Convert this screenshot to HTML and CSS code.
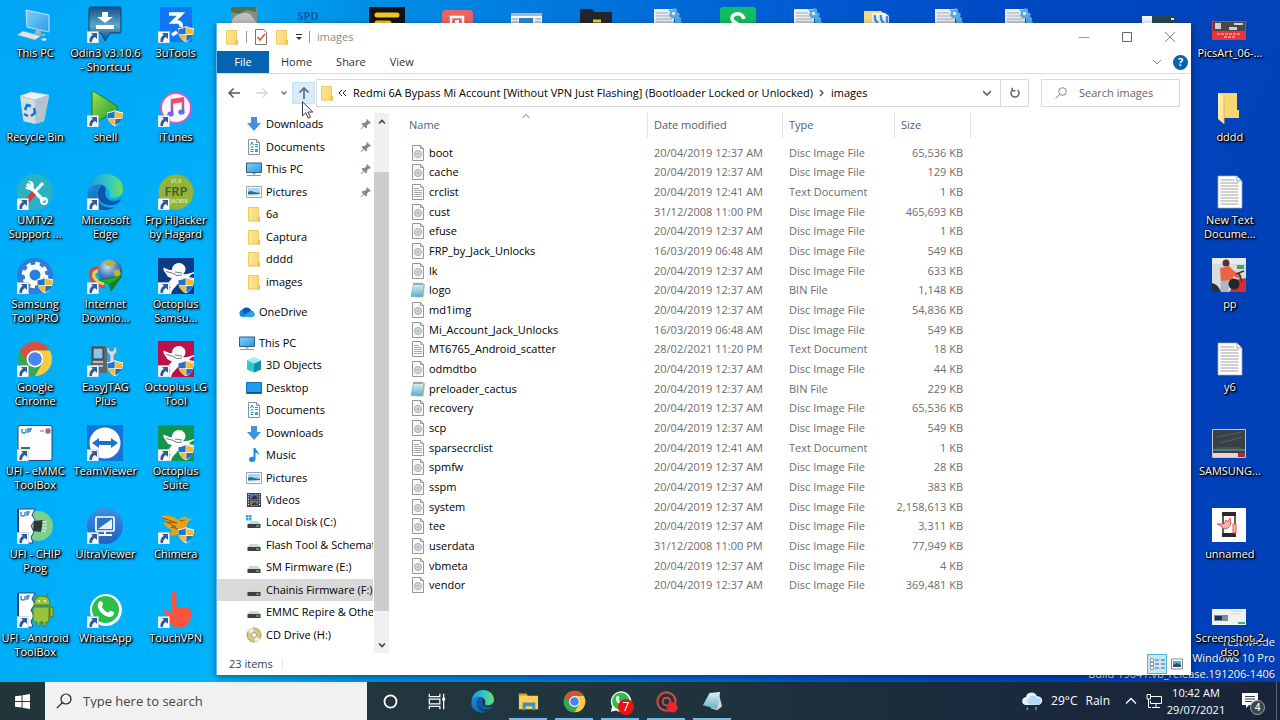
FILE: index.html
```html
<!DOCTYPE html>
<html lang="en">
<head>
<meta charset="utf-8">
<title>images</title>
<link rel="stylesheet" href="styles.css">
</head>
<body>
<svg class="defs" aria-hidden="true">
  <defs>
    <linearGradient id="gFolder" x1="0" y1="0" x2="1" y2="0"><stop offset="0" stop-color="#ffe58e"/><stop offset="1" stop-color="#f8d775"/></linearGradient>
    <linearGradient id="gEdgeA" x1="0" y1="0" x2="1" y2="0"><stop offset="0" stop-color="#1a9ae0"/><stop offset=".6" stop-color="#35c8c0"/><stop offset="1" stop-color="#6be05a"/></linearGradient>
    <linearGradient id="gEdgeB" x1="0" y1="0" x2="1" y2="1"><stop offset="0" stop-color="#1a8fe0"/><stop offset="1" stop-color="#0c4a98"/></linearGradient>
    <linearGradient id="gScreen" x1="0" y1="0" x2="1" y2="1"><stop offset="0" stop-color="#7fd0fb"/><stop offset="1" stop-color="#2b9be8"/></linearGradient>
    <linearGradient id="gOdin" x1="0" y1="0" x2="0" y2="1"><stop offset="0" stop-color="#12508c"/><stop offset=".55" stop-color="#5fa6c8"/><stop offset="1" stop-color="#0f4684"/></linearGradient>
    <linearGradient id="gPlay" x1="0" y1="0" x2="1" y2="1"><stop offset="0" stop-color="#9fe05a"/><stop offset="1" stop-color="#179a1d"/></linearGradient>
    <linearGradient id="gTunes" x1="0" y1="0" x2="1" y2="1"><stop offset="0" stop-color="#f6577c"/><stop offset=".5" stop-color="#b064e6"/><stop offset="1" stop-color="#f04cb0"/></linearGradient>
    <linearGradient id="gNote" x1="0" y1="0" x2="0" y2="1"><stop offset="0" stop-color="#f0525f"/><stop offset="1" stop-color="#4a6fe8"/></linearGradient>
    <linearGradient id="gUltra" x1="0" y1="0" x2="0" y2="1"><stop offset="0" stop-color="#3f8fe6"/><stop offset="1" stop-color="#1d62bf"/></linearGradient>
    <radialGradient id="gGlobe" cx=".4" cy=".3" r=".8"><stop offset="0" stop-color="#cfe2f7"/><stop offset=".5" stop-color="#4d80c8"/><stop offset="1" stop-color="#16377e"/></radialGradient>
    <linearGradient id="gPad" x1="0" y1="0" x2="0" y2="1"><stop offset="0" stop-color="#dff1f5"/><stop offset="1" stop-color="#5fb0c8"/></linearGradient>

    <symbol id="shortcut" viewBox="0 0 36 36"><path d="M0 24.500h11.500v11.500H0z" fill="#fafafa" stroke="#b8c4cc" stroke-width=".6"/><path d="M4 26h6v6l-2-2c-2 1-3 2.500-3 5H2.500c-.5-3.500.8-5.500 3.300-7.200z" fill="#2a5c9e"/></symbol>
    <symbol id="shield" viewBox="0 0 36 36"><path d="M28 19c2.500 1.500 5 2 8 2.200 0 7-2.500 11.500-8 14-5.500-2.500-8-7-8-14 3-.2 5.500-.7 8-2.200z" fill="#fff"/><path d="M27.700 20v7.300h-6.900c-.3-1.700-.4-3.400-.4-5 2.700-.2 5-.9 7.300-2.300zM28.300 28v6.500c4-1.700 6-4 6.900-6.500z" fill="#1c75c8"/><path d="M28.300 20v7.300h6.900c.3-1.700.4-3.400.4-5-2.700-.2-5-.9-7.300-2.300zM27.700 28v6.500c-4-1.700-6-4-6.900-6.500z" fill="#f8b830"/></symbol>
    <symbol id="folder" viewBox="0 0 16 16"><path d="M2 1h11v10h1v4.500H2z" fill="url(#gFolder)"/><path d="M2.500 1.500h10v9.500h1v4h-11z" fill="none" stroke="#ebca68"/><path d="M11.500 11h2.500v4.500h-3z" fill="#efc54e"/></symbol>
    <symbol id="down" viewBox="0 0 16 16"><path d="M5 1h6v6h4l-7 8-7-8h4z" fill="#3f94dd"/></symbol>
    <symbol id="docs" viewBox="0 0 16 16"><path d="M2.500.5h8l3 3v12h-11z" fill="#fff" stroke="#8b9398"/><path d="M10.500.5v3h3" fill="none" stroke="#8b9398"/><path d="M4.500 6l1.500-3 1.500 3M4.500 8h3m1.500-2.500h3m-3 2h3M4.500 10.500h3m-3 2h3" fill="none" stroke="#2f8fb6"/><path d="M9 10h3v3H9z" fill="#4c9fc0"/></symbol>
    <symbol id="pc" viewBox="0 0 16 16"><path d="M.5 2h15v9.500H.5z" fill="url(#gScreen)" stroke="#3b5b78"/><path d="M6.500 12h3v1.500h-3z" fill="#9ab"/><path d="M1 14.500h14" stroke="#7c9cb0"/></symbol>
    <symbol id="pics" viewBox="0 0 16 16"><path d="M.5 2.500h15v11H.5z" fill="#fff" stroke="#9aa5ad"/><path d="M2 4h12v8H2z" fill="#a9d8f4"/><path d="M2 8c3-3 6 1 12 1v3H2z" fill="#2c6e8e"/><path d="M2 10.500l12-.5v2H2z" fill="#d8ecf5"/></symbol>
    <symbol id="cloud" viewBox="0 0 16 16"><path d="M4 13a3.700 3.700 0 0 1-.7-7.300A5 5 0 0 1 12 6.500 3.400 3.400 0 0 1 13 13z" fill="#1286d8"/><path d="M3.500 5.600A5 5 0 0 1 12 6.500L5 10z" fill="#0c58a8"/><path d="M3 12.700L12 7.500a3.500 3.500 0 0 1 3.800 3c0 1.500-1.200 2.500-2.800 2.500H4z" fill="#29a4ea"/></symbol>
    <symbol id="cube" viewBox="0 0 16 16"><path d="M8 .5l7 3v9L8 15.500l-7-3v-9z" fill="#35c4d6"/><path d="M8 6.500l7-3v9l-7 3z" fill="#138fa8"/><path d="M1 3.500l7-3 7 3-7 3z" fill="#9beef3"/></symbol>
    <symbol id="desk" viewBox="0 0 16 16"><path d="M.5 2.500h15v11H.5z" fill="#1a9cf0" stroke="#1470ad"/><path d="M1 12.500h14" stroke="#0c4d82"/></symbol>
    <symbol id="music" viewBox="0 0 16 16"><path d="M7.500 1h2c.3 2.500 3.800 3.500 3.300 7.500-.6-1.700-1.600-2.500-3.300-2.800V12c0 4-6.500 4-6.500.5 0-2.500 2.500-3.400 4.500-2.500z" fill="#1e90dc"/></symbol>
    <symbol id="video" viewBox="0 0 16 16"><path d="M1 1h14v14H1z" fill="#414650"/><path d="M4 2h8v5.500H4z" fill="#5875b8"/><path d="M4 8.500h8V14H4z" fill="#86745a"/><path d="M5 7l3-4 3 2v2zM5 13l4-3 3 3z" fill="#26334f"/><path d="M2.500 2v12m11-12v12" stroke="#fff" stroke-dasharray="1 1.500"/></symbol>
    <symbol id="drive" viewBox="0 0 16 16"><path d="M4 7h8l2.500 3h-13z" fill="#d5d5d5"/><path d="M1.500 10h13v4h-13z" fill="#3c4144"/><path d="M10 12h3" stroke="#7fe08a"/></symbol>
    <symbol id="cdrive" viewBox="0 0 16 16"><path d="M0 1h2.500v2.500H0zM3 1h2.500v2.500H3zM0 4h2.500v2.500H0zM3 4h2.500v2.500H3z" fill="#27a9e5"/><path d="M5 7h7l2.500 3h-13z" fill="#d5d5d5"/><path d="M1.500 10h13v4h-13z" fill="#3c4144"/><path d="M10 12h3" stroke="#7fe08a"/></symbol>
    <symbol id="cd" viewBox="0 0 16 16"><circle cx="8" cy="8" r="7" fill="#dcc878" stroke="#a69a6b"/><path d="M8 8L2 4a7 7 0 0 1 5-3zM8 8l6 4a7 7 0 0 1-5 3z" fill="#f7f1d0"/><circle cx="8" cy="8" r="2.500" fill="#fff" stroke="#999"/></symbol>
    <symbol id="pin" viewBox="0 0 12 12"><path d="M7 1l4 4-1 .6-.8-.2L7 7.600v2L6 10.500 3.900 8.400 1 11.300l-.5-.5L3.400 7.900 1.500 6l1-.9h2L6.700 2.900l-.3-.9z" fill="#7f8a94"/></symbol>
    <symbol id="disc" viewBox="0 0 16 16"><path d="M2.500.5h8l3 3v12h-11z" fill="#f8f8f8" stroke="#979797"/><path d="M10.500.5v3h3" fill="none" stroke="#979797"/><circle cx="8" cy="9" r="3.500" fill="#dcdfe2" stroke="#a5a8ab"/><circle cx="8" cy="9" r="1" fill="#fff" stroke="#8d9093" stroke-width=".7"/></symbol>
    <symbol id="txt" viewBox="0 0 16 16"><path d="M2.500.5h8l3 3v12h-11z" fill="#fff" stroke="#949494"/><path d="M10.500.5v3h3M4 4.500h5M4 6.500h8m-8 2h8m-8 2h8m-8 2h8" fill="none" stroke="#aaa"/></symbol>
    <symbol id="bin" viewBox="0 0 16 16"><path d="M13 2l2 .5-1.500 13H5z" fill="#c9c8a4"/><path d="M3.500 2H14l-1.500 12.500H1z" fill="url(#gPad)" stroke="#62a9c0" stroke-width=".6"/><path d="M4 .8v2M6 .8v2M8 .8v2m2-2v2m2-2v2" stroke="#45525a" stroke-width=".8"/></symbol>
    <symbol id="edge" viewBox="0 0 36 36"><path d="M1 18C1 8 8.500 0 18.500 0 29 0 36 7 36 15c0 6-4.500 9-9.500 9-3 0-5-1-4.500-2.500C23.500 19 22 11.500 14.500 11 7 10.500 2 14 1 18z" fill="url(#gEdgeA)"/><path d="M.5 19.500C2 12 9 9.500 15 11c-6 3-7 11-3 17 3 4.500 10 6.500 16 5-3 2-6.500 3-10 3C8 36 0 28.500.5 19.500z" fill="url(#gEdgeB)"/><path d="M15 11c-8 5-6 22 11 20 4-.5 6.500-3 7.500-4.500 1-1 0-1.500-1-1-8 4-16-1-14-8.500.5-3 0-5-3.500-6z" fill="#1256a5"/></symbol>
    <symbol id="chrome" viewBox="0 0 36 36"><circle cx="18" cy="18" r="17" fill="#36a853"/><path d="M3.300 9.500A17 17 0 0 1 32.700 9.500H18a8.500 8.500 0 0 0-7.400 12.700z" fill="#dc4e3e"/><path d="M32.700 9.500A17 17 0 0 1 18 35l7.400-12.700a8.500 8.500 0 0 0 0-8.500L18 9.500z" fill="#fccb3e"/><circle cx="18" cy="18" r="8.500" fill="#fff"/><circle cx="18" cy="18" r="6.800" fill="#4a84ee"/></symbol>
    <symbol id="whats" viewBox="0 0 36 36"><path d="M3 34l2-8A16 16 0 1 1 11 32z" fill="#fff"/><circle cx="18.500" cy="17.500" r="13.500" fill="#29bf4b"/><path d="M12 10c2-2 3-1 4 2 .6 1.700-1.500 2-1 3 1.500 3 3.500 4.600 6 5.500 1 .3 1.500-2 2.700-1.700 3 1 4 1.500 3.300 3.200-2 5-9 3-13-1.500-3-3.500-4.500-8-2-10.500z" fill="#fff"/></symbol>
    <symbol id="squid" viewBox="0 0 36 36"><path d="M14 12c0-4 3-7 7-7 3.500 0 6.500 3 6.500 6 0 2-1 4-2.500 5 3 1 7-1 11-2v1.500c-3 .5-4 2-5 3.500l5 1v1l-9-1-4 1c-3 7-9 9-10 15h-3c0-3 1-5 3-7-3 1-8 1-13 0v-2c6 1 11-2 14-7-2 0-4-1-5-2.500L5.500 12V9.500l6 2.500z" fill="#fff"/><path d="M8 13.500l6 1.500 5 2.500 5-.5M17 14l7 1" fill="none" stroke="#4b5675" stroke-width=".8"/></symbol>
    <symbol id="longtext" viewBox="0 0 36 36"><path d="M6 2h19l5 5v27H6z" fill="#fff" stroke="#a6abb0" stroke-width=".7"/><path d="M25 2v5h5M8.500 6h14M8.500 9h18M8.500 12h18M8.500 15h18M8.500 18h18M8.500 21h18M8.500 24h18M8.500 27h18M8.500 30h18" fill="none" stroke="#9b9fa3"/></symbol>
    <symbol id="gearfile" viewBox="0 0 36 36"><path d="M4 2h20v34H4z" fill="#eceff1"/><path d="M6 6h12M6 9h14M6 12h16M6 15h18" stroke="#a2a7ac"/><path d="M18 2l4 1 2-2 3 1v3l3 2-2 4-3 1-4-1-2-3 1-3z" fill="#55a8e2"/><circle cx="23.500" cy="6.500" r="1.800" fill="#d9ecf8"/><path d="M25 11l3-2 3 2v3l2 3-5 3-3-4z" fill="#55a8e2"/></symbol>
    <symbol id="ufi" viewBox="0 0 36 36"><path d="M1 1h17l-3 6 3 5-4 6 3 6-3 5 2 6H1z" fill="#fff" stroke="#174f9c"/><path d="M1 1v34" stroke="#1a3f78" stroke-width="2"/><path d="M4 4v3q0 1 2 1t2-1V4m2 4V4h3m-3 2h2" fill="none" stroke="#2b7cc8" stroke-width="1.300"/></symbol>
  </defs>
</svg>

<main class="desktop">
  <div class="watermark">Test Mode<br>Windows 10 Pro<br>Build 19041.vb_release.191206-1406</div>

  <a class="icon c1 r1" href="#"><svg viewBox="0 0 36 36"><path d="M9 3l23 5v17L10 20z" fill="url(#gScreen)" stroke="#c7e6f8"/><path d="M20 22l4 1v4h5l-2 2-10-2z" fill="#9fb8c8"/><path d="M6 24l18 5-6 4L0 28z" fill="#dce7ef" stroke="#7d9bb0" stroke-width=".6"/><path d="M24 32l4-1 2 2-4 1z" fill="#e8eef2"/></svg><span>This PC</span></a>
  <a class="icon c2 r1" href="#"><svg viewBox="0 0 36 36"><path d="M4 0h28q2 0 2 2v22q0 2-2 2H23l-5 8-4-8H4q-2 0-2-2V2q0-2 2-2z" fill="url(#gOdin)" stroke="#0d3c72"/><path d="M15 5h6v5h5l-8 6-8-6h5zM9 18h18v4H9z" fill="#fff"/><use href="#shortcut"/></svg><span>Odin3 v3.10.6<br>- Shortcut</span></a>
  <a class="icon c3 r1" href="#"><svg viewBox="0 0 36 36"><path d="M2 0h32v35H2z" fill="#1276f5"/><path d="M11 7h12l-8 8h5q4 1 3 5M14 28l5-3" fill="none" stroke="#fff" stroke-width="3.500"/><use href="#shortcut"/><use href="#shield"/></svg><span>3uTools</span></a>
  <a class="icon c1 r2" href="#"><svg viewBox="0 0 36 36"><path d="M3 5l3 23q0 3 4 3l8 2 9-3 5-25-14 4z" fill="#d3dde4"/><path d="M3 5l11-4 18 3-14 5z" fill="#eef3f6" stroke="#b5c3cc" stroke-width=".8"/><path d="M18 9l14-5-5 26-9 3z" fill="#b4c4cf"/><path d="M8 19l2-5 4 1m3 2l1 5-4 3m-3 0l-4-2" fill="none" stroke="#1675cc" stroke-width="2.500"/></svg><span>Recycle Bin</span></a>
  <a class="icon c2 r2" href="#"><svg viewBox="0 0 36 36"><path d="M5 2q0-3 3-1l22 14q2 2 0 4L8 32q-3 1-3-2z" fill="url(#gPlay)" stroke="#1f7d17"/><use href="#shortcut"/><use href="#shield"/></svg><span>shell</span></a>
  <a class="icon c3 r2" href="#"><svg viewBox="0 0 36 36"><circle cx="18" cy="17" r="15" fill="#fbf7fc" stroke="url(#gTunes)" stroke-width="2"/><path d="M14 22V10l11-2v12" fill="none" stroke="url(#gNote)" stroke-width="2.500"/><path d="M13 8l13-2v5l-13 2z" fill="#ee4f67"/><ellipse cx="12.500" cy="23" rx="3.200" ry="2.600" fill="#7a62e8"/><ellipse cx="23.500" cy="21" rx="3.200" ry="2.600" fill="#4f77e8"/><use href="#shortcut"/></svg><span>iTunes</span></a>
  <a class="icon c1 r3" href="#"><svg viewBox="0 0 36 36"><circle cx="18" cy="18" r="18" fill="#27b3c4"/><path d="M10 10l17 17" stroke="#fff" stroke-width="3.500"/><path d="M26 9L11 25" stroke="#fff" stroke-width="3"/><path d="M17 19l-7 8" stroke="#e2392f" stroke-width="5"/><path d="M8 13a4.500 4.500 0 1 0 3-6l3 3-3 3z" fill="#fff"/><circle cx="27" cy="27" r="3" fill="none" stroke="#fff" stroke-width="2"/><use href="#shortcut"/></svg><span>UMTv2<br>Support ...</span></a>
  <a class="icon c2 r3" href="#"><svg viewBox="0 0 36 36"><use href="#edge"/><use href="#shortcut"/></svg><span>Microsoft<br>Edge</span></a>
  <a class="icon c3 r3" href="#"><svg viewBox="0 0 36 36"><circle cx="18" cy="18" r="17.500" fill="#92b43a"/><text x="18" y="22" class="logo-frp">FRP</text><text x="18" y="9" class="logo-tiny">V1.0</text><text x="21" y="29" class="logo-tiny">JACKER</text><use href="#shortcut"/></svg><span>Frp HiJacker<br>by Hagard</span></a>
  <a class="icon c1 r4" href="#"><svg viewBox="0 0 36 36"><circle cx="18" cy="18" r="18" fill="#2f7ddb"/><circle cx="18" cy="17" r="8" fill="none" stroke="#fff" stroke-width="5"/><circle cx="18" cy="17" r="11.500" fill="none" stroke="#fff" stroke-width="3.500" stroke-dasharray="4.500 4.530"/><use href="#shortcut"/><use href="#shield"/></svg><span>Samsung<br>Tool PRO</span></a>
  <a class="icon c2 r4" href="#"><svg viewBox="0 0 36 36"><path d="M14 10C5 9 2 14 4 20c2 5 8 8 14 9" fill="none" stroke="#e0482c" stroke-width="3"/><path d="M14 13C8 12 6 15 7 19c2 4 6 6 10 7" fill="none" stroke="#f3cf35" stroke-width="3"/><circle cx="23" cy="13" r="12" fill="url(#gGlobe)"/><path d="M17 5q6-5 12 0l-4 4-5-1zM26 13l6-2 2 5-5 5z" fill="#b8b72c"/><path d="M12 22l23-4-11 15-2-7z" fill="#22b02b" stroke="#0d7417" stroke-width=".7"/><path d="M22 26l13-8-11 15z" fill="#14801e"/><use href="#shortcut"/></svg><span>Internet<br>Downlo...</span></a>
  <a class="icon c3 r4" href="#"><svg viewBox="0 0 36 36"><path d="M0 0h36v36H0z" fill="#0c3c86"/><use href="#squid"/><use href="#shortcut"/><use href="#shield"/></svg><span>Octoplus<br>Samsu...</span></a>
  <a class="icon c1 r5" href="#"><svg viewBox="0 0 36 36"><use href="#chrome"/><use href="#shortcut"/></svg><span>Google<br>Chrome</span></a>
  <a class="icon c2 r5" href="#"><svg viewBox="0 0 36 36"><path d="M4 5h14l2 2v25H4z" fill="#5d666d"/><path d="M6 7h10v11H6z" fill="#8fc3ea" stroke="#2d3439"/><path d="M6 21h10m-10 4h10" stroke="#b7bdc2" stroke-width="2"/><path d="M21 5l2 5h3l2-5q4 5-1 9v10h-4V14q-5-4-2-9z" fill="#d3dce2" stroke="#71808a" stroke-width=".6"/><use href="#shortcut"/><use href="#shield"/></svg><span>EasyJTAG<br>Plus</span></a>
  <a class="icon c3 r5" href="#"><svg viewBox="0 0 36 36"><path d="M0 0h36v36H0z" fill="#bc1249"/><use href="#squid"/><use href="#shortcut"/><use href="#shield"/></svg><span>Octoplus LG<br>Tool</span></a>
  <a class="icon c1 r6" href="#"><svg viewBox="0 0 36 36"><rect x="1" y=".5" width="34" height="35" rx="2" fill="#fdfdfd" stroke="#27436b"/><path d="M5 4v3q0 1 2 1t2-1V4m2 4V4h4m-4 2h3" fill="none" stroke="#2b7cc8" stroke-width="1.300"/><path d="M23 6h4M29 4h4v4h-4z" stroke="#d34d63" fill="#5b7fc0"/><path d="M4 22h9v2H4z" fill="#38765f"/><use href="#shortcut"/></svg><span>UFI - eMMC<br>ToolBox</span></a>
  <a class="icon c2 r6" href="#"><svg viewBox="0 0 36 36"><path d="M0 0h36v36H0z" fill="#1673d6"/><circle cx="18" cy="18" r="15.500" fill="#fff"/><path d="M5 18l7-5v3h12v-3l7 5-7 5v-3H12v3z" fill="#1b72cf"/><use href="#shortcut"/></svg><span>TeamViewer</span></a>
  <a class="icon c3 r6" href="#"><svg viewBox="0 0 36 36"><path d="M0 0h36v36H0z" fill="#15954b"/><use href="#squid"/><use href="#shortcut"/><use href="#shield"/></svg><span>Octoplus<br>Suite</span></a>
  <a class="icon c1 r7" href="#"><svg viewBox="0 0 36 36"><circle cx="21" cy="18" r="15" fill="#7fcf8c"/><use href="#ufi"/><path d="M17 13l9-1-2 12-8-1z" fill="#30363a"/><path d="M25 14h5m-5 3h5m-5 3h5m-6 3h5" stroke="#eef5ee"/><use href="#shortcut"/></svg><span>UFI - CHIP<br>Prog</span></a>
  <a class="icon c2 r7" href="#"><svg viewBox="0 0 36 36"><circle cx="18" cy="18" r="18" fill="url(#gUltra)"/><rect x="9" y="9" width="18" height="14" rx="1" fill="#2a74cd" stroke="#fff" stroke-width="1.700"/><path d="M11 21L25 11v10z" fill="#eaf4fd"/><path d="M18 23v3m-6 1h13" stroke="#fff" stroke-width="2"/><use href="#shortcut"/></svg><span>UltraViewer</span></a>
  <a class="icon c3 r7" href="#"><svg viewBox="0 0 36 36"><path d="M3 8q11-2 17 4l5-3q4-1 5 2l5-1-5 4-3 8-8 5-8 1 3-6q-6-2-9-8l6 1z" fill="#e6a01c"/><path d="M5 10l14 5-10-1 9 5-5 0 7 2M22 13l5-1" fill="none" stroke="#8f5b0a"/><use href="#shortcut"/><use href="#shield"/></svg><span>Chimera</span></a>
  <a class="icon c1 r8" href="#"><svg viewBox="0 0 36 36"><use href="#ufi"/><path d="M17 13q0-9 8-9t8 9zM16 15h16v13q0 2-2 2h-1v4h-3v-4h-3v4h-3v-4q-4 0-4-2zM33 15h3v10h-3zM20 5l-2-4m11 4l2-4" fill="#9ac437" stroke="#557b18" stroke-width="1"/><circle cx="22" cy="9" r="1" fill="#fff"/><circle cx="28" cy="9" r="1" fill="#fff"/><use href="#shortcut"/></svg><span>UFI - Android<br>ToolBox</span></a>
  <a class="icon c2 r8" href="#"><svg viewBox="0 0 36 36"><use href="#whats"/><use href="#shortcut"/></svg><span>WhatsApp</span></a>
  <a class="icon c3 r8" href="#"><svg viewBox="0 0 36 36"><path d="M13.500 2q0-2 2.500-2t2.500 2v13l11 1q4 1 4 5-1 7-3 11-2 3-7 3h-6q-3 0-5-4L6 19q0-2 3-1l4.500 4z" fill="#f9543e"/><use href="#shortcut"/></svg><span>TouchVPN</span></a>

  <span class="icon c4 r1"><svg viewBox="0 0 36 36"><path d="M3 0h26v36H3z" fill="#829080"/><path d="M4 13q8-10 18-6l7 9v20H4z" fill="#c1bdbd"/><path d="M3 0h25v5l-9-2-8 4-8-2z" fill="#566f43"/></svg></span>
  <span class="icon c5 r1"><svg viewBox="0 0 36 36"><text x="10" y="13" class="logo-spd">SPD</text><path d="M2 18q8-7 15 0" fill="#1366bd"/><path d="M20 18q7-6 14 0" fill="#15a6e0"/></svg></span>
  <span class="icon c6 r1"><svg viewBox="0 0 36 36"><path d="M0 0h36v36H0z" fill="#14130f"/><path d="M8 8h20M8 16h12" stroke="#f3c522" stroke-width="5" stroke-linecap="round"/></svg></span>
  <span class="icon c7 r1"><svg viewBox="0 0 36 36"><rect x="3" y="3" width="31" height="31" rx="4" fill="#e96463"/><path d="M12 20v-10h12v10" fill="none" stroke="#fff" stroke-width="2.500"/><path d="M16 13h4v4h-4z" fill="#fff"/></svg></span>
  <span class="icon c8 r1"><svg viewBox="0 0 36 36"><path d="M2 6h31v25H2z" fill="#f5f7f8"/><path d="M2 6h31v3H2z" fill="#a9b8c1"/><path d="M10 11h14v12H10z" fill="#3085ce"/><path d="M3 12h6M3 15h6m17-3h6m-6 3h6" stroke="#899"/></svg></span>
  <span class="icon c9 r1"><svg viewBox="0 0 36 36"><path d="M1 2h12l3 3h17v28H1z" fill="#252628"/><path d="M14 14h8" stroke="#f2ce38" stroke-width="3"/></svg></span>
  <span class="icon c10 r1"><svg viewBox="0 0 36 36"><use href="#gearfile"/></svg></span>
  <span class="icon c11 r1"><svg viewBox="0 0 36 36"><rect width="36" height="36" rx="3" fill="#12bd60"/><path d="M24 12q-2-6-8-5-6 2-3 7l6 4" fill="none" stroke="#fff" stroke-width="3.500"/></svg></span>
  <span class="icon c12 r1"><svg viewBox="0 0 36 36"><use href="#gearfile"/></svg></span>
  <span class="icon c13 r1"><svg viewBox="0 0 36 36"><path d="M4 4h17l4 3v28H4z" fill="#f5d989"/><path d="M12 6h13l4 3v27H12z" fill="#eef3f7"/><path d="M15 8q-1 5 3 8m3-8q-1 5 3 8m3-7v7" fill="none" stroke="#4a8fd0" stroke-width="2.500"/></svg></span>
  <span class="icon c14 r1"><svg viewBox="0 0 36 36"><use href="#gearfile"/></svg></span>
  <span class="icon c15 r1"><svg viewBox="0 0 36 36"><use href="#gearfile"/></svg></span>
  <span class="icon c17 r1"><svg viewBox="0 0 36 36"><path d="M0 9h34v20H0z" fill="#f2f4f5"/><path d="M10 9h24v20H10z" fill="#244653"/><path d="M29 11h3v2h-3z" fill="#dfe7e9"/></svg></span>

  <a class="icon c18 r1" href="#"><svg viewBox="0 0 36 36"><path d="M0 14h34v19H0z" fill="#e5343b"/><path d="M1 15h32v9H1z" fill="#4b4647"/><path d="M3 16h6v6H3zM17 20h8v3h-8zM22 16h9v2h-9z" fill="#d3cfcd"/><path d="M5 27h24M12 30h11" stroke="#ffd8d8" stroke-dasharray="3 1"/></svg><span>PicsArt_06-...</span></a>
  <a class="icon c18 r2" href="#"><svg viewBox="0 0 36 36"><path d="M6 2h19v17h2v8H6z" fill="#f6d774"/><path d="M6 2l6 4v27l-6-5z" fill="#ffe9a3"/><path d="M12 6v27" stroke="#d8b75a"/></svg><span>dddd</span></a>
  <a class="icon c18 r3" href="#"><svg viewBox="0 0 36 36"><use href="#longtext"/></svg><span>New Text<br>Docume...</span></a>
  <a class="icon c18 r4" href="#"><svg viewBox="0 0 36 36"><path d="M0 0h34v34H0z" fill="#d5dddd"/><path d="M0 0h34v6H0z" fill="#e7ecea"/><path d="M25 7h7v4h-7z" fill="#4c9b72"/><circle cx="14" cy="5" r="3.500" fill="#503338"/><path d="M8 10l9-2 5 5 8 5-2 3-7-3v6l-12 1z" fill="#ee6144"/><path d="M9 23l11-1-3 7-1 5H8z" fill="#aeb5c3"/><path d="M23 22l11-2v14H17l5-6z" fill="#d62f2f"/><circle cx="22" cy="26" r="5.500" fill="#23262d"/><path d="M0 25q6 1 9 9H0z" fill="#2c2f36"/><path d="M24 16l8-3M27 15l3 9" stroke="#333a44" stroke-width="1.500"/></svg><span>pp</span></a>
  <a class="icon c18 r5" href="#"><svg viewBox="0 0 36 36"><use href="#longtext"/></svg><span>y6</span></a>
  <a class="icon c18 r6" href="#"><svg viewBox="0 0 36 36"><path d="M.5 4.500h33v28H.5z" fill="#384246" stroke="#c6c6c6"/><path d="M5 12l25-5M8 18l22-6M5 23h25" stroke="#59625f"/><path d="M1 24h32v2H1z" fill="#517c76"/><path d="M1 28h25v4H1z" fill="#f0cfcd"/><path d="M26 28h7v4h-7z" fill="#b12c32"/></svg><span>SAMSUNG...</span></a>
  <a class="icon c18 r7" href="#"><svg viewBox="0 0 36 36"><path d="M0 0h34v34H0z" fill="#fff"/><rect x="11" y="5" width="12" height="23" rx="1" fill="#fff" stroke="#2b292a" stroke-width="1.500"/><path d="M10 4h14v4H10zM10 25h14v4H10z" fill="#2b292a"/><path d="M5 16h7l2-4 2 2 2-4 1 6-3 4-4 1-3-3zM21 16h3v9h-3z" fill="#f6b7b4" stroke="#dc5a58"/></svg><span>unnamed</span></a>
  <a class="icon c18 r8" href="#"><svg viewBox="0 0 36 36"><path d="M0 17h34v16H0z" fill="#f0f2f2"/><path d="M2 23h14v6H2z" fill="#7c8b98"/><path d="M3 24h7v4H3z" fill="#18355a"/><path d="M19 19h12M19 22h8" stroke="#cfd4d6"/><path d="M26 30h7v2h-7z" fill="#3fae73"/></svg><span>Screenshot_2<br>dso</span></a>

  <section class="window">
    <header class="titlebar">
      <svg class="i16" viewBox="0 0 16 16"><use href="#folder"/></svg>
      <i class="tick"></i>
      <button class="plain" aria-label="Properties"><svg class="i16" viewBox="0 0 16 16"><path d="M2.500.5h8l3 3v12h-11z" fill="#fff" stroke="#777"/><path d="M4.500 8l2.500 3 5-6" fill="none" stroke="#e0562f" stroke-width="1.700"/></svg></button>
      <button class="plain" aria-label="New folder"><svg class="i16" viewBox="0 0 16 16"><use href="#folder"/></svg></button>
      <button class="plain" aria-label="Customize toolbar"><svg class="i8" viewBox="0 0 8 8"><path d="M1 1.500h6" stroke="#333"/><path d="M1 4h6L4 7z" fill="#333"/></svg></button>
      <i class="tick"></i>
      <span class="title">images</span>
      <div class="winbtns">
        <button aria-label="Minimize"><svg viewBox="0 0 12 12"><path d="M1 6.500h10" stroke="#999"/></svg></button>
        <button aria-label="Maximize"><svg viewBox="0 0 12 12"><path d="M1.500 1.500h9v9h-9z" fill="none" stroke="#666"/></svg></button>
        <button aria-label="Close"><svg viewBox="0 0 12 12"><path d="M1 1l10 10M11 1L1 11" stroke="#888"/></svg></button>
      </div>
    </header>
    <nav class="tabs">
      <button class="file">File</button><button>Home</button><button>Share</button><button>View</button>
      <span class="grow"></span>
      <button class="expand" aria-label="Expand ribbon"><svg class="i8" viewBox="0 0 8 8"><path d="M0 2l4 4 4-4" fill="none" stroke="#888"/></svg></button>
      <button class="help" aria-label="Help">?</button>
    </nav>
    <div class="address">
      <button class="navbtn" aria-label="Back"><svg class="i12" viewBox="0 0 12 12"><path d="M12 6H1m4.500-4.500L1 6l4.500 4.500" fill="none" stroke="#555" stroke-width="1.500"/></svg></button>
      <button class="navbtn" aria-label="Forward"><svg class="i12" viewBox="0 0 12 12"><path d="M0 6h11M6.500 1.500L11 6l-4.500 4.500" fill="none" stroke="#d4d4d4" stroke-width="1.300"/></svg></button>
      <button class="navbtn small" aria-label="Recent"><svg class="i8" viewBox="0 0 8 8"><path d="M1.500 2.500L4 5l2.500-2.500" fill="none" stroke="#666" stroke-width="1.300"/></svg></button>
      <button class="navbtn up" aria-label="Up"><svg class="i12" viewBox="0 0 12 12"><path d="M6 12V1M1.500 5.500L6 1l4.500 4.500" fill="none" stroke="#5c6b77" stroke-width="1.700"/></svg></button>
      <div class="path">
        <svg class="i16" viewBox="0 0 16 16"><use href="#folder"/></svg>
        <svg class="i8 chev" viewBox="0 0 8 8"><path d="M4 1L1 4l3 3M8 1L5 4l3 3" fill="none" stroke="#222"/></svg>
        <a href="#">Redmi 6A Bypass Mi Account [Without VPN Just Flashing] (Bootloader Locked or Unlocked)</a>
        <svg class="i8" viewBox="0 0 8 8"><path d="M2 1l3 3-3 3" fill="none" stroke="#444" stroke-width="1.200"/></svg>
        <a href="#">images</a>
        <span class="grow"></span>
        <button class="drop" aria-label="Previous locations"><svg class="i8" viewBox="0 0 8 8"><path d="M0 2l4 4 4-4" fill="none" stroke="#666" stroke-width="1.700"/></svg></button>
        <button class="refresh" aria-label="Refresh"><svg class="i12" viewBox="0 0 12 12"><path d="M8.500 3a4 4 0 1 1-5 0M3 .8l.3 3h3.200" fill="none" stroke="#666" stroke-width="1.500"/></svg></button>
      </div>
      <label class="search"><svg class="i12" viewBox="0 0 12 12"><circle cx="7.500" cy="4.500" r="3.800" fill="none" stroke="#888"/><path d="M5 7L.5 11.500" stroke="#888"/></svg><input type="text" placeholder="Search images" aria-label="Search images"></label>
    </div>
    <div class="body">
      <nav class="tree">
        <a href="#"><svg><use href="#down"/></svg><span>Downloads</span><svg class="pin"><use href="#pin"/></svg></a>
        <a href="#"><svg><use href="#docs"/></svg><span>Documents</span><svg class="pin"><use href="#pin"/></svg></a>
        <a href="#"><svg><use href="#pc"/></svg><span>This PC</span><svg class="pin"><use href="#pin"/></svg></a>
        <a href="#"><svg><use href="#pics"/></svg><span>Pictures</span><svg class="pin"><use href="#pin"/></svg></a>
        <a href="#"><svg><use href="#folder"/></svg><span>6a</span></a>
        <a href="#"><svg><use href="#folder"/></svg><span>Captura</span></a>
        <a href="#"><svg><use href="#folder"/></svg><span>dddd</span></a>
        <a href="#"><svg><use href="#folder"/></svg><span>images</span></a>
        <a class="root" href="#"><svg><use href="#cloud"/></svg><span>OneDrive</span></a>
        <a class="root" href="#"><svg><use href="#pc"/></svg><span>This PC</span></a>
        <a href="#"><svg><use href="#cube"/></svg><span>3D Objects</span></a>
        <a href="#"><svg><use href="#desk"/></svg><span>Desktop</span></a>
        <a href="#"><svg><use href="#docs"/></svg><span>Documents</span></a>
        <a href="#"><svg><use href="#down"/></svg><span>Downloads</span></a>
        <a href="#"><svg><use href="#music"/></svg><span>Music</span></a>
        <a href="#"><svg><use href="#pics"/></svg><span>Pictures</span></a>
        <a href="#"><svg><use href="#video"/></svg><span>Videos</span></a>
        <a href="#"><svg><use href="#cdrive"/></svg><span>Local Disk (C:)</span></a>
        <a href="#"><svg><use href="#drive"/></svg><span>Flash Tool &amp; Schemat</span></a>
        <a href="#"><svg><use href="#drive"/></svg><span>SM Firmware (E:)</span></a>
        <a class="sel" href="#"><svg><use href="#drive"/></svg><span>Chainis Firmware (F:)</span></a>
        <a href="#"><svg><use href="#drive"/></svg><span>EMMC Repire &amp; Othe</span></a>
        <a href="#"><svg><use href="#cd"/></svg><span>CD Drive (H:)</span></a>
      </nav>
      <div class="scroll">
        <button aria-label="Scroll up"><svg class="i8" viewBox="0 0 8 8"><path d="M1 5.500l3-3 3 3" fill="none" stroke="#444" stroke-width="1.700"/></svg></button>
        <i class="thumb"></i>
        <button aria-label="Scroll down"><svg class="i8" viewBox="0 0 8 8"><path d="M1 2.500l3 3 3-3" fill="none" stroke="#444" stroke-width="1.700"/></svg></button>
      </div>
      <div class="files">
        <table>
          <thead><tr><th>Name<svg class="i8 sort" viewBox="0 0 8 8"><path d="M.5 6L4 2.500 7.500 6" fill="none" stroke="#777"/></svg></th><th>Date modified</th><th>Type</th><th>Size</th></tr></thead>
          <tbody>
            <tr><td><svg><use href="#disc"/></svg>boot</td><td>20/04/2019 12:37 AM</td><td>Disc Image File</td><td>65,536 KB</td></tr>
            <tr><td><svg><use href="#disc"/></svg>cache</td><td>20/04/2019 12:37 AM</td><td>Disc Image File</td><td>129 KB</td></tr>
            <tr><td><svg><use href="#txt"/></svg>crclist</td><td>20/04/2019 12:41 AM</td><td>Text Document</td><td>1 KB</td></tr>
            <tr><td><svg><use href="#disc"/></svg>cust</td><td>31/12/2008 11:00 PM</td><td>Disc Image File</td><td>465,693 KB</td></tr>
            <tr><td><svg><use href="#disc"/></svg>efuse</td><td>20/04/2019 12:37 AM</td><td>Disc Image File</td><td>1 KB</td></tr>
            <tr><td><svg><use href="#disc"/></svg>FRP_by_Jack_Unlocks</td><td>16/03/2019 06:48 AM</td><td>Disc Image File</td><td>549 KB</td></tr>
            <tr><td><svg><use href="#disc"/></svg>lk</td><td>20/04/2019 12:37 AM</td><td>Disc Image File</td><td>633 KB</td></tr>
            <tr><td><svg><use href="#bin"/></svg>logo</td><td>20/04/2019 12:37 AM</td><td>BIN File</td><td>1,148 KB</td></tr>
            <tr><td><svg><use href="#disc"/></svg>md1img</td><td>20/04/2019 12:37 AM</td><td>Disc Image File</td><td>54,836 KB</td></tr>
            <tr><td><svg><use href="#disc"/></svg>Mi_Account_Jack_Unlocks</td><td>16/03/2019 06:48 AM</td><td>Disc Image File</td><td>549 KB</td></tr>
            <tr><td><svg><use href="#txt"/></svg>MT6765_Android_scatter</td><td>28/02/2021 11:20 PM</td><td>Text Document</td><td>18 KB</td></tr>
            <tr><td><svg><use href="#disc"/></svg>odmdtbo</td><td>20/04/2019 12:37 AM</td><td>Disc Image File</td><td>44 KB</td></tr>
            <tr><td><svg><use href="#bin"/></svg>preloader_cactus</td><td>20/04/2019 12:37 AM</td><td>BIN File</td><td>229 KB</td></tr>
            <tr><td><svg><use href="#disc"/></svg>recovery</td><td>20/04/2019 12:37 AM</td><td>Disc Image File</td><td>65,536 KB</td></tr>
            <tr><td><svg><use href="#disc"/></svg>scp</td><td>20/04/2019 12:37 AM</td><td>Disc Image File</td><td>549 KB</td></tr>
            <tr><td><svg><use href="#txt"/></svg>sparsecrclist</td><td>20/04/2019 12:41 AM</td><td>Text Document</td><td>1 KB</td></tr>
            <tr><td><svg><use href="#disc"/></svg>spmfw</td><td>20/04/2019 12:37 AM</td><td>Disc Image File</td><td>28 KB</td></tr>
            <tr><td><svg><use href="#disc"/></svg>sspm</td><td>20/04/2019 12:37 AM</td><td>Disc Image File</td><td>383 KB</td></tr>
            <tr><td><svg><use href="#disc"/></svg>system</td><td>20/04/2019 12:37 AM</td><td>Disc Image File</td><td>2,158,613 KB</td></tr>
            <tr><td><svg><use href="#disc"/></svg>tee</td><td>20/04/2019 12:37 AM</td><td>Disc Image File</td><td>3,311 KB</td></tr>
            <tr><td><svg><use href="#disc"/></svg>userdata</td><td>31/12/2008 11:00 PM</td><td>Disc Image File</td><td>77,949 KB</td></tr>
            <tr><td><svg><use href="#disc"/></svg>vbmeta</td><td>20/04/2019 12:37 AM</td><td>Disc Image File</td><td>4 KB</td></tr>
            <tr><td><svg><use href="#disc"/></svg>vendor</td><td>20/04/2019 12:37 AM</td><td>Disc Image File</td><td>369,481 KB</td></tr>
          </tbody>
        </table>
      </div>
    </div>
    <footer class="status">
      <span>23 items</span><i></i><span class="grow"></span>
      <button class="view on" aria-label="Details view"><svg class="i16" viewBox="0 0 16 16"><path d="M1.500 2.500h3v3h-3zM1.500 6.500h3v3h-3zM1.500 10.500h3v3h-3z" fill="#fff" stroke="#777" stroke-width=".7"/><path d="M6 4h4m2 0h4M6 8h4m2 0h4M6 12h4m2 0h4" stroke="#566"/></svg></button>
      <button class="view" aria-label="Thumbnail view"><svg class="i12" viewBox="0 0 12 12"><path d="M.5 1h11v10H.5z" fill="#fff" stroke="#888"/><path d="M2 3h8v6H2z" fill="#5aa6da"/><path d="M2 7l4-2 4 2v2H2z" fill="#245273"/></svg></button>
    </footer>
  </section>

  <svg class="cursor" viewBox="0 0 12 18"><path d="M.5.8v14l3.300-3 2.500 5.400 2.200-1L6 11h4.800z" fill="#fff" stroke="#222" stroke-width=".9"/></svg>
</main>

<footer class="taskbar">
  <button class="start" aria-label="Start"><svg viewBox="0 0 16 16"><path d="M0 2.500L7 1.500V7.500H0zM8 1.300L16 0v7.500H8zM0 8.500h7v6l-7-1zM8 8.500h8V16l-8-1.300z" fill="#fff"/></svg></button>
  <label class="tsearch"><svg viewBox="0 0 16 16"><circle cx="10" cy="6" r="5" fill="none" stroke="#222" stroke-width="1.200"/><path d="M6.500 9.500L.8 15.200" stroke="#222" stroke-width="1.200"/></svg><input type="text" placeholder="Type here to search" aria-label="Type here to search"></label>
  <button class="app" aria-label="Cortana"><svg viewBox="0 0 24 24"><circle cx="12" cy="12" r="6.300" fill="none" stroke="#fff" stroke-width="1.900"/></svg></button>
  <button class="app" aria-label="Task view"><svg viewBox="0 0 24 24"><path d="M4.500 4v3h11V4M4.500 9.500h11v5h-11zM4.500 20v-3h11v3M19.500 4v16" fill="none" stroke="#fff" stroke-width="1.300"/><path d="M18 8h3v3h-3z" fill="#fff"/></svg></button>
  <button class="app" aria-label="Edge"><svg viewBox="0 0 36 36"><use href="#edge"/></svg></button>
  <button class="app open" aria-label="File Explorer"><svg viewBox="0 0 24 24"><path d="M2 4h8l1 2h11v14H2z" fill="#fbce57"/><path d="M2 4h8l1 2H2z" fill="#e3a12e"/><path d="M6 13h13v8h-3v-4H9v4H6z" fill="#3e8fc8"/></svg></button>
  <button class="app open" aria-label="Chrome"><svg viewBox="0 0 36 36"><use href="#chrome"/></svg></button>
  <button class="app open" aria-label="WhatsApp"><svg viewBox="0 0 36 36"><use href="#whats"/></svg><b class="badge">7</b></button>
  <button class="app open" aria-label="Recorder"><svg viewBox="0 0 24 24"><circle cx="12" cy="12" r="9.500" fill="none" stroke="#d34a43" stroke-width="2.200"/><circle cx="12" cy="12" r="4" fill="none" stroke="#d34a43" stroke-width="2"/><circle cx="18" cy="18" r="5.500" fill="#ed2631"/></svg></button>
  <button class="app open" aria-label="Notepad"><svg viewBox="0 0 24 24"><path d="M18 2l4 15-5 4-7-2z" fill="#d9d4c6"/><path d="M9 3l11-1-3 18-15-4z" fill="url(#gPad)"/></svg></button>
  <span class="grow"></span>
  <button class="weather"><svg viewBox="0 0 24 24"><path d="M5 16a4.500 4.500 0 0 1-.5-9A6.500 6.500 0 0 1 17 6a5 5 0 0 1 2 10z" fill="#e6f2fb"/><path d="M8 15a4 4 0 0 1 0-7 5 5 0 0 1 9 0 4 4 0 0 1 1 8z" fill="#b5daf4"/><path d="M6 18q2 3 0 4-2-1 0-4zM16 17q2 4 0 5-2-1 0-5z" fill="#4aa8ec"/></svg><span>29°C</span><span>Rain</span></button>
  <button class="tray" aria-label="Show hidden icons"><svg class="i12" viewBox="0 0 12 12"><path d="M1 8.500l5-5 5 5" fill="none" stroke="#fff" stroke-width="1.300"/></svg></button>
  <button class="tray net" aria-label="Network"><svg viewBox="0 0 16 16"><path d="M5 3.500h10.500v7H4.500V8M10 10.500V14m-4 .5h8M2.500 6v8.500H5M1 1.500h3.500V6H1z" fill="none" stroke="#fff"/></svg></button>
  <button class="clock"><span>10:42 AM</span><span>29/07/2021</span></button>
  <button class="notes" aria-label="Notifications"><svg viewBox="0 0 16 16"><path d="M0 0h16v12H7l-3 3v-3H0z" fill="#fff"/><path d="M3 3.500h10M3 6h10M3 8.500h7" stroke="#344"/></svg><b class="count">4</b></button>
  <i class="peek"></i>
</footer>
</body>
</html>
```
FILE: styles.css
```css
* { box-sizing: border-box; }
body {
  margin: 0;
  height: 100vh;
  display: flex;
  flex-direction: column;
  overflow: hidden;
  font: 11px/14px "Open Sans", "Noto Sans", sans-serif;
  color: #000;
}
button { border: 0; padding: 0; margin: 0; background: none; font: inherit; color: inherit; }
input { border: 0; padding: 0; background: none; font: inherit; min-width: 0; outline: 0; }
a { color: inherit; text-decoration: none; }
svg { display: block; flex: none; }
.defs { position: absolute; width: 0; height: 0; }
.grow { flex: 1; }
.i16 { width: 16px; height: 16px; }
.i12 { width: 12px; height: 12px; }
.i8 { width: 8px; height: 8px; }

/* Desktop */
.desktop {
  position: relative;
  flex: 1;
  min-height: 0;
  padding: 0 15px 14px 0;
  display: grid;
  grid-template-columns: repeat(18, minmax(0, 1fr));
  grid-template-rows: repeat(8, minmax(0, 1fr));
  background:
    linear-gradient(to bottom, rgba(0, 90, 200, .1), rgba(0, 90, 200, 0) 40%),
    linear-gradient(to right, #00aefa 0, #00b3fd 17%, #0096ea 28%, #0074dd 48%, #0058cf 65%, #0046c3 80%, #0040b8 100%);
}
.icon { position: relative; display: flex; flex-direction: column; align-items: center; gap: 3px; padding-top: 7px; }
.icon svg { width: 36px; height: 36px; overflow: visible; }
.icon span {
  color: #fff;
  text-align: center;
  white-space: nowrap;
  text-shadow: 1px 1px 1px #000, 0 0 2px #000, 1px 1px 2px #000, 1px 1px 3px #000;
}
.c1 { grid-column: 1; } .c2 { grid-column: 2; } .c3 { grid-column: 3; } .c4 { grid-column: 4; }
.c5 { grid-column: 5; } .c6 { grid-column: 6; } .c7 { grid-column: 7; } .c8 { grid-column: 8; }
.c9 { grid-column: 9; } .c10 { grid-column: 10; } .c11 { grid-column: 11; } .c12 { grid-column: 12; }
.c13 { grid-column: 13; } .c14 { grid-column: 14; } .c15 { grid-column: 15; } .c17 { grid-column: 17; }
.c18 { grid-column: 18; }
.r1 { grid-row: 1; } .r2 { grid-row: 2; } .r3 { grid-row: 3; } .r4 { grid-row: 4; }
.r5 { grid-row: 5; } .r6 { grid-row: 6; } .r7 { grid-row: 7; } .r8 { grid-row: 8; }
.logo-frp { font: 600 13px "Open Sans", sans-serif; fill: #4c5626; text-anchor: middle; }
.logo-tiny { font: 600 5px "Open Sans", sans-serif; fill: #e2edc0; text-anchor: middle; }
.logo-spd { font: 700 11px "Open Sans", sans-serif; fill: #1558a8; text-anchor: middle; }
.watermark {
  position: absolute;
  right: 5px;
  bottom: 0;
  color: #fff;
  line-height: 16px;
  text-align: right;
  text-shadow: 0 0 1px #013;
}

/* Explorer window */
.window {
  position: absolute;
  left: 216px;
  right: 89px;
  top: 23px;
  bottom: 7px;
  display: flex;
  flex-direction: column;
  background: #fff;
  border-left: 1px solid #5cb8e8;
  box-shadow: 0 2px 7px rgba(0, 0, 0, .45);
}
.titlebar { display: flex; align-items: center; height: 28px; padding-left: 7px; }
.tick { width: 1px; height: 12px; margin: 0 6px; background: #999; }
.titlebar .plain { margin-right: 5px; }
.titlebar .tick + .title { color: #8a8a8a; }
.titlebar .plain + .tick { margin: 0 7px 0 1px; }
.winbtns { margin-left: auto; display: flex; }
.winbtns button { width: 43px; height: 28px; display: grid; place-items: center; }
.winbtns svg { width: 12px; height: 12px; }
.tabs { display: flex; align-items: stretch; height: 23px; border-bottom: 1px solid #dadbdc; color: #333; padding-right: 3px; }
.tabs button { padding: 0 12px; }
.tabs .file { width: 52px; background: #0563b0; color: #fff; }
.tabs .help { padding: 0; width: 15px; height: 15px; align-self: center; border-radius: 50%; background: #0563b0; color: #fff; font-weight: 700; line-height: 14px; }
.address { display: flex; align-items: center; padding: 5px 11px 6px 3px; height: 39px; }
.navbtn { width: 28px; height: 22px; display: grid; place-items: center; }
.navbtn.small { width: 16px; }
.navbtn.up { width: 23px; background: #d9ecf9; border: 1px solid #c4e2f5; }
.path { flex: 1; align-self: stretch; display: flex; align-items: center; border: 1px solid #d9d9d9; margin: 0 12px 0 1px; padding-left: 2px; white-space: nowrap; }
.path .chev { margin: 0 7px 0 3px; }
.path a + .i8 { margin: 0 5px; }
.drop { width: 26px; display: grid; place-items: center; }
.refresh { align-self: stretch; width: 28px; border-left: 1px solid #d9d9d9; display: grid; place-items: center; }
.search { width: 139px; align-self: stretch; display: flex; align-items: center; gap: 12px; border: 1px solid #d9d9d9; padding-left: 13px; }
.search input { flex: 1; }
.search input::placeholder { color: #666; opacity: 1; }

.body { flex: 1; min-height: 0; display: flex; }
.tree { width: 156px; padding-bottom: 7px; display: flex; flex-direction: column; overflow: hidden; }
.tree a { flex: 1; min-height: 0; display: flex; align-items: center; gap: 4px; padding-left: 29px; white-space: nowrap; }
.tree svg { width: 16px; height: 16px; }
.tree .pin { width: 12px; height: 12px; margin: 0 1px 0 auto; }
.tree .root { margin-top: 8px; padding-left: 22px; }
.tree .sel { background: #d9d9d9; }
.scroll { width: 15px; margin-left: 1px; background: #f0f0f0; display: flex; flex-direction: column; }
.scroll button { flex: none; height: 17px; display: grid; place-items: center; }
.scroll .thumb { flex: 1; margin: 42px 0 25px; background: #cdcdcd; }
.files { flex: 1; padding-left: 16px; }
table { display: block; }
thead, tbody { display: grid; }
tbody { height: 452px; margin-top: 5px; grid-auto-rows: minmax(0, 1fr); color: #6d6d6d; }
tr { display: grid; grid-template-columns: 243px 135px 112px 76px; align-items: center; }
th { position: relative; height: 25px; padding: 5px 0 0 6px; text-align: left; font-weight: 400; color: #4c607a; border-right: 1px solid #e2e2e2; }
th:first-child { padding-left: 4px; }
.sort { position: absolute; left: 117px; top: -1px; }
td { padding: 0 0 0 6px; white-space: nowrap; }
td:first-child { display: flex; align-items: center; gap: 3px; color: #000; padding-left: 5px; }
td:last-child { text-align: right; padding: 0 8px 0 0; }
td svg { width: 16px; height: 16px; }
.status { height: 22px; display: flex; align-items: center; padding: 0 4px 0 12px; color: #2c4563; }
.status i { width: 1px; height: 12px; margin-left: 9px; background: #e2e2e2; }
.view { width: 20px; height: 20px; display: grid; place-items: center; }
.view.on { background: #c5e7f7; border: 1px solid #4fb3dd; }

.cursor { position: absolute; left: 302px; top: 101px; width: 12px; height: 18px; }

/* Taskbar */
.taskbar { height: 38px; flex: none; display: flex; align-items: stretch; background: linear-gradient(to right, #21363b, #20353e 50%, #1b2a3c 75%, #18243a); color: #fff; }
.start { width: 45px; display: grid; place-items: center; }
.start svg { width: 15px; height: 15px; }
.tsearch { width: 322px; background: #f1f1f1; display: flex; align-items: center; gap: 11px; padding-left: 11px; }
.tsearch svg { width: 16px; height: 16px; }
.tsearch input { flex: 1; font-size: 13px; }
.tsearch input::placeholder { color: #444; opacity: 1; }
.app { position: relative; width: 46px; display: grid; place-items: center; }
.app svg { width: 23px; height: 23px; }
.app.open::after { content: ""; position: absolute; left: 4px; right: 4px; bottom: 0; height: 2px; background: #76b9ed; }
.badge { position: absolute; left: 21px; top: 17px; width: 16px; height: 16px; border-radius: 50%; background: #ef1010; font: 12px/16px "Open Sans", sans-serif; }
.weather { display: flex; align-items: center; gap: 8px; margin-right: 12px; font-size: 12px; }
.weather svg { width: 21px; height: 21px; }
.tray { width: 18px; display: grid; place-items: center; }
.net { width: 28px; }
.net svg { width: 16px; height: 16px; }
.clock { width: 56px; display: flex; flex-direction: column; align-items: center; justify-content: center; line-height: 17px; }
.notes { position: relative; width: 52px; display: grid; place-items: center; }
.notes svg { width: 16px; height: 16px; }
.count { position: absolute; left: 26px; top: 18px; width: 15px; height: 15px; border-radius: 50%; background: #3c444c; border: 1px solid #9aa; font: 600 10px/13px "Open Sans", sans-serif; }
.peek { width: 4px; border-left: 1px solid #59636f; }
```
